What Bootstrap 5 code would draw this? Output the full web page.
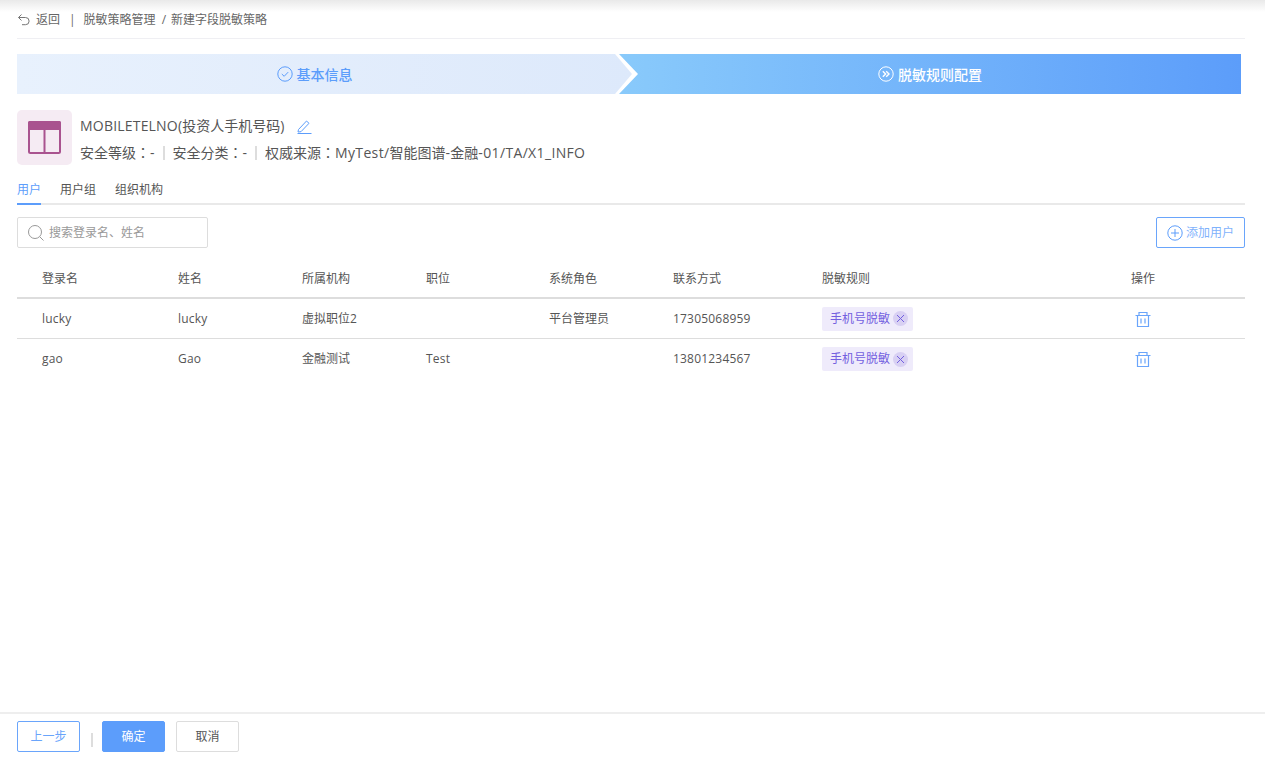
<!doctype html>
<html lang="zh"><head><meta charset="utf-8">
<title>新建字段脱敏策略</title>
<link href="https://cdn.jsdelivr.net/npm/bootstrap@5.3.0/dist/css/bootstrap.min.css" rel="stylesheet">
<style>
html,body{height:100%}
body{font-family:"Open Sans","Noto Sans CJK SC",sans-serif;color:#555;background:#fff;font-size:13px;overflow:hidden}
.pg{height:761px;position:relative}
.pg::before{content:"";position:absolute;left:0;right:0;top:0;height:12px;background:linear-gradient(#e9e9e9,#fff);pointer-events:none}
.mainc{padding:0 20px 0 17px}
.crumb{height:39px;border-bottom:1px solid #efeff3;font-size:12px;color:#666;padding-top:2px}
.crumb .sep{margin:0 8px 0 9px}
.crumb .sl{margin:0 5px 0 6px}
.crumb .bk{margin-left:5px}
.steps{margin-top:15px;height:40px;width:1224px;font-size:14px;font-weight:500}
.st1{width:615px;padding-right:20px;background:linear-gradient(90deg,#e8f1fd,#dde9fb);color:#5c9dfb;clip-path:polygon(0 0,598px 0,100% 50%,598px 100%,0 100%)}
.st2{flex:1;margin-left:-13px;background:linear-gradient(90deg,#89cafb,#5c9dfa);color:#fff;clip-path:polygon(0 0,100% 0,100% 100%,0 100%,19px 50%)}
.infor{margin-top:16px;height:55px}
.tico{width:55px;height:55px;border-radius:5px;background:#f5ebf3}
.tname{font-size:14px;color:#555;line-height:20px;margin-top:6px}
.tname svg{margin-left:13px}
.tmeta{font-size:14px;color:#555;line-height:20px;margin-top:6px}
.cln{font-family:"Noto Sans CJK TC",sans-serif}
.ltx{letter-spacing:.2px}
.ltw{letter-spacing:.35px}
.vb{display:inline-block;width:2px;height:14px;background:#ddd;margin:0 8px;vertical-align:-2px}
.tabsx{margin-top:14px;height:26px;border-bottom:2px solid #e9e9e9;font-size:12px;gap:19px;padding-top:1px}
.tabsx div{height:25px;color:#555;line-height:20px}
.tabsx div.on{color:#5c9dfb;border-bottom:2px solid #5c9dfb;width:24px}
.tbar{margin-top:12px;height:31px}
.srch{width:191px;height:31px;border:1px solid #ddd;border-radius:2px;padding-left:9px;color:#999;font-size:12px;gap:4px}
.addb{width:89px;height:31px;border:1px solid #6aa5fb;border-radius:2px;color:#7fb2fc;font-size:12px;gap:3px;background:#fff}
.grid{display:grid;grid-template-columns:136px 124px 124px 123px 124px 149px 309px 1fr;padding-left:25px;align-items:center;font-size:12px;color:#555}
.ghead{height:37px;margin-top:14px;padding-bottom:2px;border-bottom:2px solid #ddd}
.grow1{height:40px;border-bottom:1px solid #ddd}
.grow2{height:40px}
.rule{display:inline-flex;align-items:center;height:24px;width:91px;background:#efebfb;border-radius:2px;color:#7360e0;padding-left:8px;gap:3px}
.xc{width:15px;height:15px;border-radius:50%;background:#d8d0f3;display:flex;align-items:center;justify-content:center}
.foot{position:absolute;left:0;right:0;bottom:0;height:49px;border-top:2px solid #eee;padding:7px 0 0 17px;gap:11px}
.fb{height:31px;width:63px;border-radius:2px;font-size:12px;padding:0;line-height:29px;text-align:center;border:1px solid #ddd;color:#555;background:#fff}
.fb.pri{background:#5c9dfb;border-color:#5c9dfb;color:#fff}
.fb.out{border-color:#6aa5fb;color:#6aa5fb}
.fsep{margin:-2px -2px 0 0;width:2px}
</style></head>
<body>
<div class="pg">
<div class="mainc">
 <div class="crumb d-flex align-items-center">
  <svg width="14" height="14" viewBox="0 0 14 14" fill="none" stroke="#777" stroke-width="1"><path d="M4.500 1.500 1.500 4.500l3 3M1.500 4.500h7a3.600 3.600 0 0 1 0 7.200H5"/></svg>
  <span class="bk">返回</span><span class="sep">|</span><span>脱敏策略管理</span><span class="sl">/</span><span>新建字段脱敏策略</span>
 </div>
 <div class="steps d-flex">
  <div class="st1 d-flex align-items-center justify-content-center gap-1">
   <svg width="16" height="16" viewBox="0 0 16 16" fill="none" stroke="#5c9dfb"><circle cx="8" cy="8" r="7.200"/><path d="m4.800 8 2.400 2.300 4-4.200"/></svg><span>基本信息</span>
  </div>
  <div class="st2 d-flex align-items-center justify-content-center gap-1">
   <svg width="16" height="16" viewBox="0 0 16 16" fill="none" stroke="#fff"><circle cx="8" cy="8" r="7.200"/><path stroke-width="1.400" d="m4.800 5.200 2.800 2.800-2.800 2.800M8.200 5.200 11 8l-2.800 2.800"/></svg><span>脱敏规则配置</span>
  </div>
 </div>
 <div class="infor d-flex">
  <div class="tico d-flex align-items-center justify-content-center flex-shrink-0">
   <svg width="33" height="33" viewBox="0 0 33 33"><rect x="1" y="1" width="31" height="31" rx="1.500" fill="none" stroke="#a9538f" stroke-width="2"/><rect x="0" y="0" width="33" height="9" rx="1.500" fill="#a9538f"/><path d="M16.500 8v24" stroke="#a9538f" stroke-width="2"/></svg>
  </div>
  <div class="ms-2">
   <div class="tname d-flex align-items-center"><span><span class="ltx">MOBILETELNO(</span>投资人手机号码)</span>
    <svg width="15" height="15" viewBox="0 0 15 15" fill="none" stroke="#5c9dfb"><path d="m1.500 10.500 8-8.500 2.500 2.300-8 8.400-3 .3zM.5 14.500h14"/></svg>
   </div>
   <div class="tmeta">安全等级<span class="cln" lang="zh-TW">：</span>-<i class="vb"></i>安全分类<span class="cln" lang="zh-TW">：</span>-<i class="vb"></i>权威来源<span class="cln" lang="zh-TW">：</span><span class="ltw">MyTest/</span>智能图谱<span class="ltw">-</span>金融<span class="ltw">-01/TA/X1_INFO</span></div>
  </div>
 </div>
 <div class="tabsx d-flex">
  <div class="on">用户</div><div>用户组</div><div>组织机构</div>
 </div>
 <div class="tbar d-flex justify-content-between">
  <div class="srch d-flex align-items-center">
   <svg width="18" height="18" viewBox="0 0 18 18" fill="none" stroke="#999"><circle cx="8" cy="8" r="6.500"/><path d="m12.800 12.800 3.700 3.700"/></svg><span>搜索登录名、姓名</span>
  </div>
  <div class="addb d-flex align-items-center justify-content-center">
   <svg width="16" height="16" viewBox="0 0 16 16" fill="none" stroke="#5c9dfb"><circle cx="8" cy="8" r="7.200"/><path d="M8 4v8M4 8h8"/></svg><span>添加用户</span>
  </div>
 </div>
 <div class="grid ghead"><div>登录名</div><div>姓名</div><div>所属机构</div><div>职位</div><div>系统角色</div><div>联系方式</div><div>脱敏规则</div><div>操作</div></div>
 <div class="grid grow1"><div class="ltx">lucky</div><div class="ltx">lucky</div><div>虚拟职位2</div><div></div><div>平台管理员</div><div class="ltx">17305068959</div>
  <div><span class="rule">手机号脱敏<span class="xc"><svg width="9" height="9" viewBox="0 0 9 9" stroke="#7360e0"><path d="m1 1 7 7M8 1 1 8"/></svg></span></span></div>
  <div class="ps-1"><svg width="16" height="17" viewBox="0 0 16 17" fill="none" stroke="#6aa5fb" stroke-width="1.200"><path d="M.5 4.500h15M4 4.500V1.500h8v3M2.500 4.500v11h11v-11M6 7.500v5M10 7.500v5"/></svg></div></div>
 <div class="grid grow2"><div class="ltx">gao</div><div class="ltx">Gao</div><div>金融测试</div><div class="ltx">Test</div><div></div><div class="ltx">13801234567</div>
  <div><span class="rule">手机号脱敏<span class="xc"><svg width="9" height="9" viewBox="0 0 9 9" stroke="#7360e0"><path d="m1 1 7 7M8 1 1 8"/></svg></span></span></div>
  <div class="ps-1"><svg width="16" height="17" viewBox="0 0 16 17" fill="none" stroke="#6aa5fb" stroke-width="1.200"><path d="M.5 4.500h15M4 4.500V1.500h8v3M2.500 4.500v11h11v-11M6 7.500v5M10 7.500v5"/></svg></div></div>
</div>
<div class="foot d-flex align-items-start">
 <button class="btn fb out">上一步</button>
 <i class="vb align-self-center fsep"></i>
 <button class="btn fb pri">确定</button>
 <button class="btn fb">取消</button>
</div>
</div>
<script src="https://cdn.jsdelivr.net/npm/bootstrap@5.3.0/dist/js/bootstrap.bundle.min.js"></script>
</body></html>
